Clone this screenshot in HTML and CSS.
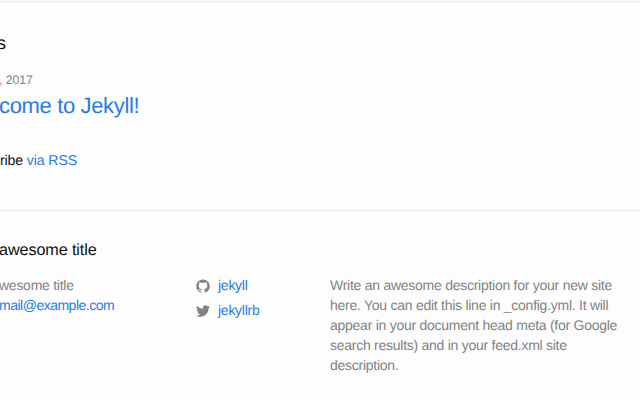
FILE: index.html
```html
<!DOCTYPE html>
<html lang="en">
<head>
<meta charset="utf-8">
<title>Your awesome title</title>
<link rel="stylesheet" href="styles.css">
</head>
<body>
<main class="page-content">
<h1 class="page-heading"><span>s</span></h1>
<div class="post-meta"><span>, 2017</span></div>
<h2 class="post-title"><a href="#">come to Jekyll!</a></h2>
<p class="rss"><span>ribe <a href="#">via RSS</a></span></p>
</main>
<footer class="site-footer">
<h2 class="footer-heading"><span>awesome title</span></h2>
<div class="columns">
<div class="contact"><div class="name">wesome title</div><div class="email"><a href="#">mail@example.com</a></div></div>
<ul class="social">
<li><svg viewBox="0 0 16 16"><path d="M7.999,0.431c-4.285,0-7.76,3.474-7.76,7.761c0,3.428,2.223,6.337,5.307,7.363c0.388,0.071,0.53-0.168,0.53-0.374c0-0.184-0.007-0.672-0.01-1.32c-2.159,0.469-2.614-1.04-2.614-1.04c-0.353-0.896-0.862-1.135-0.862-1.135c-0.705-0.481,0.053-0.472,0.053-0.472c0.779,0.055,1.189,0.8,1.189,0.8c0.692,1.186,1.816,0.843,2.258,0.645c0.071-0.502,0.271-0.843,0.493-1.037C4.86,11.425,3.049,10.76,3.049,7.786c0-0.847,0.302-1.54,0.799-2.082C3.768,5.507,3.501,4.718,3.924,3.65c0,0,0.652-0.209,2.134,0.796C6.677,4.273,7.34,4.187,8,4.184c0.659,0.003,1.323,0.089,1.943,0.261c1.482-1.004,2.132-0.796,2.132-0.796c0.423,1.068,0.157,1.857,0.077,2.054c0.497,0.542,0.798,1.235,0.798,2.082c0,2.981-1.814,3.637-3.543,3.829c0.279,0.24,0.527,0.713,0.527,1.437c0,1.037-0.01,1.874-0.01,2.129c0,0.208,0.14,0.449,0.534,0.373c3.081-1.028,5.302-3.935,5.302-7.362C15.76,3.906,12.285,0.431,7.999,0.431z"/></svg><a href="#">jekyll</a></li>
<li><svg viewBox="0 0 16 16"><path d="M15.969,3.058c-0.586,0.26-1.217,0.436-1.878,0.515c0.675-0.405,1.194-1.045,1.438-1.809c-0.632,0.375-1.332,0.647-2.076,0.793c-0.596-0.636-1.446-1.033-2.387-1.033c-1.806,0-3.27,1.464-3.27,3.27c0,0.256,0.029,0.506,0.085,0.745C5.163,5.404,2.753,4.102,1.14,2.124C0.859,2.607,0.698,3.168,0.698,3.767c0,1.134,0.577,2.135,1.455,2.722C1.616,6.472,1.112,6.325,0.671,6.08c0,0.014,0,0.027,0,0.041c0,1.584,1.127,2.906,2.623,3.206C3.02,9.402,2.731,9.442,2.433,9.442c-0.211,0-0.416-0.021-0.615-0.059c0.416,1.299,1.624,2.245,3.055,2.271c-1.119,0.877-2.529,1.4-4.061,1.4c-0.264,0-0.524-0.015-0.78-0.046c1.447,0.928,3.166,1.469,5.013,1.469c6.015,0,9.304-4.983,9.304-9.304c0-0.142-0.003-0.283-0.009-0.423C14.976,4.29,15.531,3.714,15.969,3.058z"/></svg><a href="#">jekyllrb</a></li>
</ul>
<p class="description"><span>Write an awesome description for your new site</span><br><span>here. You can edit this line in _config.yml. It will</span><br><span>appear in your document head meta (for Google</span><br><span>search results) and in your feed.xml site</span><br><span>description.</span></p>
</div>
</footer>
</body>
</html>
```
FILE: styles.css
```css
* { box-sizing: border-box; margin: 0; padding: 0; }
html, body { height: 400px; overflow: hidden; }
body { background: #fdfdfd; color: #111; font: 14px/20px "Liberation Sans", Arial, sans-serif; white-space: nowrap; text-rendering: geometricPrecision; padding-top: 1px; }
a { color: #2a7ae2; text-decoration: none; }
.page-content { height: 209px; border-top: 1px solid #e8e8e8; padding-top: 31px; }
.page-heading { font-size: 18px; font-weight: 400; line-height: 20px; margin-left: -3px; }
.post-meta { color: #828282; font-size: 12.4px; margin: 17px 0 0 -1px; letter-spacing: -0.1px; }
.post-title { font-size: 22px; font-weight: 400; line-height: 32px; letter-spacing: -0.35px; margin-left: -1px; }
.rss { margin-top: 29px; font-size: 14.2px; letter-spacing: -0.15px; }
.site-footer { border-top: 1px solid #e8e8e8; padding-top: 29px; color: #828282; }
.footer-heading { color: #111; font-size: 16.2px; font-weight: 400; line-height: 20px; margin-left: -1px; letter-spacing: -0.1px; }
.columns { display: grid; grid-template-columns: 196px 134px 1fr; margin-top: 15px; letter-spacing: -0.26px; }
.name { margin-left: -1px; }
.email { letter-spacing: -0.5px; margin-left: -1px; }
.social { list-style: none; line-height: 20px; }
.social li { display: flex; align-items: center; height: 20px; margin-bottom: 5px; }
.social svg { width: 14px; height: 14px; fill: #828282; margin: 2px 8px 0 0; }
```
